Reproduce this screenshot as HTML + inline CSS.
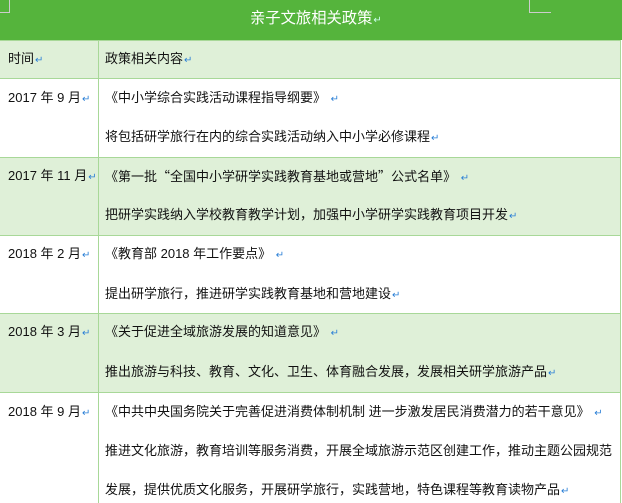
<!DOCTYPE html>
<html><head><meta charset="utf-8"><style>
body{margin:0;width:622px;height:503px;overflow:hidden;background:#fff;font-family:"Liberation Sans","Noto Sans CJK SC",sans-serif;font-size:13px;color:#111;position:relative}
.r{position:absolute;left:0;width:620px;border-right:1px solid #a8d898}
.g{background:#dff0d8}
.h{position:absolute;left:0;height:1px;width:621px;background:#a8d898}
.v{position:absolute;left:98px;top:40px;width:1px;height:463px;background:#a8d898}
.t{position:absolute;white-space:nowrap;line-height:16px}
.a{color:#2a7fd6;font-size:10px;margin-left:1px}
.q{font-family:"Noto Sans CJK SC",sans-serif}
</style></head><body>
<div style="position:absolute;left:0;top:0;width:622px;height:40px;background:#55b43c"></div>
<div style="position:absolute;left:0;top:0;width:9px;height:12px;border-right:1px solid #ccc;border-bottom:1px solid #ccc"></div>
<div style="position:absolute;left:529px;top:0;width:21px;height:12px;border-left:1px solid #ccc;border-bottom:1px solid #ccc"></div>
<div class="t" style="left:250px;top:11px;color:#fff;font-size:15.3px">亲子文旅相关政策<span class="a" style="color:#cfe">↵</span></div>
<div class="r g" style="top:40px;height:38px"></div>
<div class="r" style="top:78px;height:79px"></div>
<div class="r g" style="top:157px;height:78px"></div>
<div class="r" style="top:235px;height:78px"></div>
<div class="r g" style="top:313px;height:79px"></div>
<div class="r" style="top:392px;height:111px"></div>
<div class="h" style="top:40px"></div><div class="h" style="top:78px"></div><div class="h" style="top:157px"></div><div class="h" style="top:235px"></div><div class="h" style="top:313px"></div><div class="h" style="top:392px"></div>
<div class="v"></div>
<div class="t" style="left:8px;top:51px">时间<span class="a">↵</span></div>
<div class="t" style="left:105px;top:51px">政策相关内容<span class="a">↵</span></div>

<div class="t" style="left:8px;top:90px">2017 年 9 月<span class="a">↵</span></div>
<div class="t" style="left:105px;top:90px">《中小学综合实践活动课程指导纲要》 <span class="a">↵</span></div>
<div class="t" style="left:105px;top:129px">将包括研学旅行在内的综合实践活动纳入中小学必修课程<span class="a">↵</span></div>

<div class="t" style="left:8px;top:168px">2017 年 11 月<span class="a">↵</span></div>
<div class="t" style="left:105px;top:168px">《第一批<span class="q">“</span>全国中小学研学实践教育基地或营地<span class="q">”</span>公式名单》 <span class="a">↵</span></div>
<div class="t" style="left:105px;top:207px">把研学实践纳入学校教育教学计划，加强中小学研学实践教育项目开发<span class="a">↵</span></div>

<div class="t" style="left:8px;top:246px">2018 年 2 月<span class="a">↵</span></div>
<div class="t" style="left:105px;top:246px">《教育部 2018 年工作要点》 <span class="a">↵</span></div>
<div class="t" style="left:105px;top:286px">提出研学旅行，推进研学实践教育基地和营地建设<span class="a">↵</span></div>

<div class="t" style="left:8px;top:324px">2018 年 3 月<span class="a">↵</span></div>
<div class="t" style="left:105px;top:324px">《关于促进全域旅游发展的知道意见》 <span class="a">↵</span></div>
<div class="t" style="left:105px;top:364px">推出旅游与科技、教育、文化、卫生、体育融合发展，发展相关研学旅游产品<span class="a">↵</span></div>

<div class="t" style="left:8px;top:404px">2018 年 9 月<span class="a">↵</span></div>
<div class="t" style="left:105px;top:404px">《中共中央国务院关于完善促进消费体制机制 进一步激发居民消费潜力的若干意见》 <span class="a">↵</span></div>
<div class="t" style="left:105px;top:443px">推进文化旅游，教育培训等服务消费，开展全域旅游示范区创建工作，推动主题公园规范</div>
<div class="t" style="left:105px;top:482px">发展，提供优质文化服务，开展研学旅行，实践营地，特色课程等教育读物产品<span class="a">↵</span></div>
</body></html>
